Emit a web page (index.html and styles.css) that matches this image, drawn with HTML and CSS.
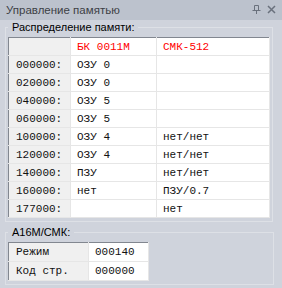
FILE: index.html
```html
<!DOCTYPE html>
<html lang="ru">
<head>
    <meta charset="UTF-8">
    <title>Управление памятью</title>
    <link rel="stylesheet" href="styles.css">
</head>
<body>
    <div class="titlebar">
        <span class="title">Управление памятью</span>
        <span class="buttons">
            <svg width="9" height="9" viewBox="0 0 9 9">
                <path d="M2.5 0.5h4v5h-4z M0.5 5.5h8 M4.5 5.5v3.5" fill="none" stroke="#6a717d" stroke-width="1"/>
            </svg>
            <svg width="9" height="9" viewBox="0 0 9 9">
                <path d="M1 1l7 7 M8 1l-7 7" stroke="#6a717d" stroke-width="1.5"/>
            </svg>
        </span>
    </div>

    <fieldset class="group">
        <legend>Распределение памяти:</legend>
        <table class="grid memmap">
            <tr class="head"><td class="addr"></td><td class="red">БК 0011М</td><td class="red">СМК-512</td></tr>
            <tr><td class="addr">000000:</td><td>ОЗУ 0</td><td></td></tr>
            <tr><td class="addr">020000:</td><td>ОЗУ 0</td><td></td></tr>
            <tr><td class="addr">040000:</td><td>ОЗУ 5</td><td></td></tr>
            <tr><td class="addr">060000:</td><td>ОЗУ 5</td><td></td></tr>
            <tr><td class="addr">100000:</td><td>ОЗУ 4</td><td>нет/нет</td></tr>
            <tr><td class="addr">120000:</td><td>ОЗУ 4</td><td>нет/нет</td></tr>
            <tr><td class="addr">140000:</td><td>ПЗУ</td><td>нет/нет</td></tr>
            <tr><td class="addr">160000:</td><td>нет</td><td>ПЗУ/0.7</td></tr>
            <tr><td class="addr">177000:</td><td></td><td>нет</td></tr>
        </table>
    </fieldset>

    <fieldset class="group second">
        <legend>А16М/СМК:</legend>
        <table class="grid regs">
            <tr><td class="addr">Режим</td><td>000140</td></tr>
            <tr><td class="addr">Код стр.</td><td>000000</td></tr>
        </table>
    </fieldset>
</body>
</html>
```

FILE: styles.css
```css
body {
    margin: 0;
    background-color: #cfd3dc;
    font-family: "Liberation Sans", Arial, sans-serif;
    font-size: 11px;
}
.titlebar {
    height: 20px;
    background-color: #bcc2cd;
    display: flex;
    align-items: center;
    justify-content: space-between;
    padding: 0 6px 0 6px;
    color: #3c3f45;
    font-size: 11.5px;
}
.buttons {
    display: flex;
    gap: 6px;
    margin-top: -2px;
}
.group {
    margin: 0 9px 0 5px;
    padding: 3px 2px 3px 2px;
    border: 1px solid #dde0e6;
    color: #000;
}
.group legend {
    padding: 0 4px;
    line-height: 14px;
}
.group.second {
    margin-top: 3px;
    margin-right: 8px;
}
.grid {
    border-collapse: collapse;
    border: 1px solid #828790;
    background-color: #fff;
    font-family: "Liberation Mono", "Courier New", monospace;
    font-size: 11px;
    color: #111;
}
.grid td {
    height: 17px;
    padding: 0 0 0 6px;
    border-bottom: 1px solid #e6e6e6;
    border-right: 1px solid #e6e6e6;
    white-space: nowrap;
}
.grid td.addr {
    background-color: #f0f0f0;
    padding-left: 7px;
}
.grid .red {
    color: #ff0000;
}
.memmap {
    width: 262px;
}
.memmap td:nth-child(1) { width: 54px; }
.memmap td:nth-child(2) { width: 79px; }
.regs {
    width: 141px;
}
.regs td:nth-child(1) { width: 72px; }
.regs td {
    height: 18px;
}
```
